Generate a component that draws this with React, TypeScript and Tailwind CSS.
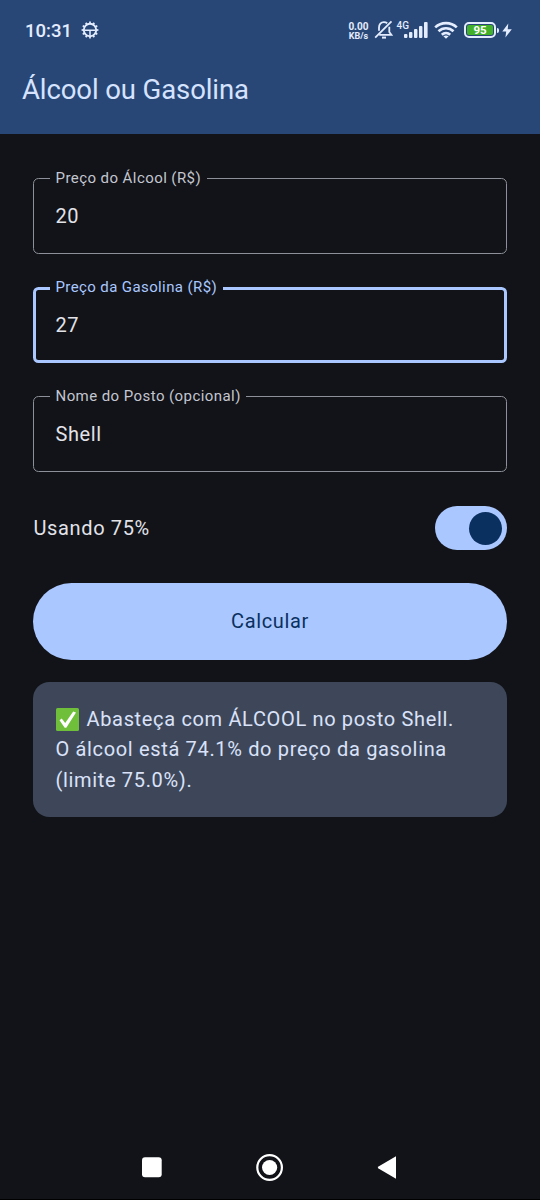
import React from "react";

function GearStatusIcon() {
  const teeth = Array.from({ length: 12 }, (_, i) => i * 30);
  return (
    <svg width="18" height="18" viewBox="0 0 18 18" className="ml-[9px]" fill="none" stroke="#e4edff">
      <circle cx="9" cy="9" r="6.2" strokeWidth="1.9" />
      {teeth.map((a) => (
        <path key={a} d="M9 .6v2" strokeWidth="1.7" transform={`rotate(${a} 9 9)`} />
      ))}
      <path d="M3.5 9.2h11M9 9.2v5.5" strokeWidth="1.5" />
    </svg>
  );
}

function BellOffIcon() {
  return (
    <svg width="19" height="20" viewBox="0 0 19 20" className="ml-[5px]" fill="none" stroke="#e4edff" strokeWidth="1.8">
      <path d="M13.2 3.3C12.2 2.5 11.2 2.2 9.9 2.2 6.9 2.2 5 4.5 5 7.5v3.2M5.2 14.9h12.3l-2.2-2.9V6.8" />
      <path d="M1.2 17.6 17.5 1.3" />
      <path d="M8 17.6h4" strokeWidth="2" />
    </svg>
  );
}

function SignalIcon() {
  return (
    <svg width="24" height="16" viewBox="0 0 24 16" fill="#e4edff">
      <rect x="0" y="12" width="3.4" height="4" rx="1" />
      <rect x="5" y="10" width="3.4" height="6" rx="1" />
      <rect x="10" y="7" width="3.4" height="9" rx="1" />
      <rect x="15" y="4" width="3.4" height="12" rx="1" />
      <rect x="20" y="0" width="3.6" height="16" rx="1" />
    </svg>
  );
}

function WifiIcon() {
  return (
    <svg width="24" height="18" viewBox="0 0 24 18" className="ml-[6px]" fill="none" stroke="#e4edff" strokeWidth="2.6">
      <path d="M1.2 6.4C7.2.7 16.8.7 22.8 6.4" />
      <path d="M4.5 10.3c4.2-4 10.8-4 15 0" />
      <path d="M7.8 13.7c2.4-2.2 6-2.2 8.4 0" />
      <path d="M12 17.8 9.4 15.3q2.600-1.800 5.200 0z" fill="#e4edff" stroke="none" />
    </svg>
  );
}

function Battery() {
  return (
    <div className="ml-[6px] flex items-center">
      <div className="h-[16px] w-[32px] rounded-[5px] border-2 border-[#e4edff] p-px">
        <div className="flex h-full items-center justify-center rounded-[2px] bg-[#43b02a] text-[11.5px] leading-none font-bold text-white">
          <span className="pt-px">95</span>
        </div>
      </div>
      <div className="ml-px h-[5px] w-[2px] rounded-r-sm bg-[#e4edff]" />
      <svg width="10" height="15" viewBox="0 0 10 15" className="ml-[3px]" fill="#e4edff">
        <path d="M6.3.5.3 8.5h3.9L3.4 14.5 9.8 6.2H5.7z" />
      </svg>
    </div>
  );
}

function OutlinedField({ label, value, focused = false }: { label: string; value: string; focused?: boolean }) {
  return (
    <fieldset
      className={
        focused
          ? "h-[76px] rounded-[5.5px] border-[3px] border-[#aac7ff]"
          : "h-[76px] rounded-[5.5px] border-[1.4px] border-[#8e9099]"
      }
    >
      <legend
        className={
          focused
            ? "ml-[14px] h-0 px-[5.5px] text-[15px] leading-0 tracking-[0.39px] text-[#aac7ff]"
            : "ml-[16px] h-0 px-[5.5px] text-[15px] leading-0 tracking-[0.43px] text-[#c4c6d0]"
        }
      >
        <span className={focused ? "relative -top-[2px]" : "relative -top-px"}>{label}</span>
      </legend>
      <div
        className={
          focused
            ? "flex h-[69px] items-center px-[19.5px] text-[20px] tracking-[0.6px]"
            : "flex h-[73px] items-center px-[21.5px] text-[20px] tracking-[0.6px]"
        }
      >
        {value}
      </div>
    </fieldset>
  );
}

export default function App() {
  return (
    <div className="flex h-[1200px] w-[540px] flex-col border-b border-black bg-[#111318] font-[Roboto,sans-serif] text-[#e2e2e9]">
      <header className="h-[134px] shrink-0 bg-[#284777]">
        <div className="flex h-[60px] items-center pr-[28px] pl-[25px] text-[#e4edff]">
          <span className="w-[47px] pt-[3px] text-[18.5px] font-medium">10:31</span>
          <GearStatusIcon />
          <div className="ml-auto flex items-center">
            <div className="flex flex-col items-center pt-[3px] text-[10px] leading-[9.5px] font-bold">
              <span>0.00</span>
              <span className="text-[9px]">KB/s</span>
            </div>
            <BellOffIcon />
            <span className="ml-[4px] -mr-[5px] self-start pt-[1.5px] text-[10px] leading-[10px] font-medium">4G</span>
            <SignalIcon />
            <WifiIcon />
            <Battery />
          </div>
        </div>
        <h1 className="pl-[22px] text-[27.5px] leading-[60px] tracking-[-0.1px] text-[#d6e3ff]">Álcool ou Gasolina</h1>
      </header>

      <main className="flex flex-1 flex-col px-[33px] pt-[44px]">
        <div className="flex flex-col gap-[33px]">
          <OutlinedField label="Preço do Álcool (R$)" value="20" />
          <OutlinedField label="Preço da Gasolina (R$)" value="27" focused />
          <OutlinedField label="Nome do Posto (opcional)" value="Shell" />
        </div>

        <div className="mt-[34px] flex h-[44px] items-center justify-between">
          <span className="pl-[0.5px] text-[20px] tracking-[0.64px]">Usando 75%</span>
          <button
            role="switch"
            aria-checked="true"
            className="flex h-[44px] w-[72px] items-center justify-end rounded-full bg-[#aac7ff] pr-[5.5px]"
          >
            <span className="size-[33px] rounded-full bg-[#0a305f]" />
          </button>
        </div>

        <button className="mt-[33px] h-[77px] shrink-0 rounded-full bg-[#aac7ff] pb-px text-[20px] tracking-[0.66px] text-[#0a305f]">
          Calcular
        </button>

        <section className="mt-[22px] h-[135px] rounded-[16.5px] bg-[#3e4759] px-[22.5px] pt-[22px] text-[20px] leading-[30.3px] tracking-[0.66px] text-[#dae2f9]">
          <p className="flex items-center whitespace-nowrap">
            <svg width="23" height="23" viewBox="0 0 23 23" className="mr-[8px]">
              <rect width="23" height="23" rx="1.5" fill="#6fbf3b" />
              <path d="M3.5 12.2 5.7 10.6 9.2 15 17.2 3.5 20 4.5 10.3 19.7H8.7z" fill="#fff" />
            </svg>
            Abasteça com ÁLCOOL no posto Shell.
          </p>
          <p className="whitespace-nowrap">O álcool está 74.1% do preço da gasolina</p>
          <p>(limite 75.0%).</p>
        </section>
      </main>

      <nav className="flex h-[65px] items-center justify-center">
        <svg width="256" height="30" viewBox="0 0 256 30" fill="#fff">
          <rect x="0" y="5.3" width="19.7" height="20" rx="3" />
          <circle cx="127.6" cy="15.5" r="12.3" fill="none" stroke="#fff" strokeWidth="2.2" />
          <circle cx="127.6" cy="15.5" r="7.6" />
          <path d="M254 4.2v22.6l-17.5-10.3q-1.5-1 0-2z" />
        </svg>
      </nav>
    </div>
  );
}
